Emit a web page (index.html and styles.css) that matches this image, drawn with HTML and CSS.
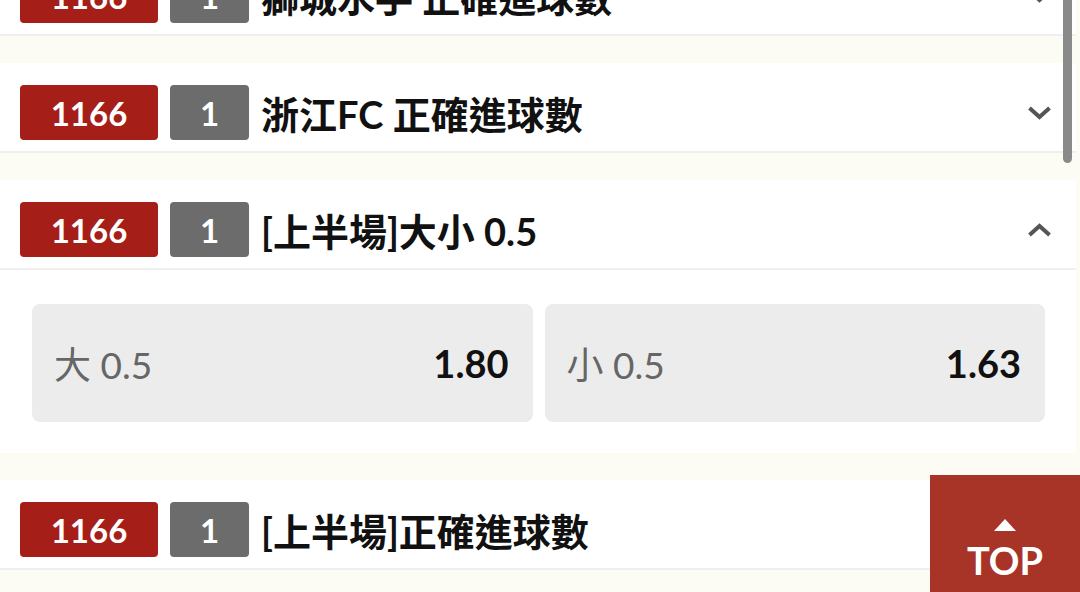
FILE: index.html
```html
<!DOCTYPE html>
<html lang="zh-Hant">
<head>
<meta charset="utf-8">
<link rel="stylesheet" href="styles.css">
</head>
<body>
<div class="list">
  <section class="card">
    <div class="head">
      <span class="badge red">1166</span>
      <span class="badge gray">1</span>
      <span class="title">獅城水手 正確進球數</span>
      <svg class="chev" viewBox="0 0 24 14"><path d="M2 2 L12 11 L22 2"/></svg>
    </div>
  </section>
  <section class="card">
    <div class="head">
      <span class="badge red">1166</span>
      <span class="badge gray">1</span>
      <span class="title">浙江FC 正確進球數</span>
      <svg class="chev" viewBox="0 0 24 14"><path d="M2 2 L12 11 L22 2"/></svg>
    </div>
  </section>
  <section class="card">
    <div class="head">
      <span class="badge red">1166</span>
      <span class="badge gray">1</span>
      <span class="title">[上半場]大小 0.5</span>
      <svg class="chev" viewBox="0 0 24 14"><path d="M2 12 L12 3 L22 12"/></svg>
    </div>
    <div class="body">
      <div class="odd"><span class="lbl">大 0.5</span><span class="val">1.80</span></div>
      <div class="odd"><span class="lbl">小 0.5</span><span class="val">1.63</span></div>
    </div>
  </section>
  <section class="card">
    <div class="head">
      <span class="badge red">1166</span>
      <span class="badge gray">1</span>
      <span class="title">[上半場]正確進球數</span>
      <svg class="chev" viewBox="0 0 24 14"><path d="M2 2 L12 11 L22 2"/></svg>
    </div>
  </section>
</div>
<div class="scrollbar"></div>
<div class="top-btn">
  <span class="tri"></span>
  <span class="top-txt">TOP</span>
</div>
</body>
</html>
```

FILE: styles.css
```css
html, body {
  margin: 0;
  padding: 0;
  background: #fdfcf4;
  overflow: hidden;
  font-family: Lato, "Noto Sans CJK TC", sans-serif;
}
.list {
  width: 1076px;
  margin-top: -54px;
  display: flex;
  flex-direction: column;
  gap: 27px;
}
.card {
  background: #ffffff;
}
.head {
  display: flex;
  align-items: center;
  height: 55px;
  padding: 22px 24px 11px 20px;
  border-bottom: 2px solid #efeff1;
}
.badge {
  height: 55px;
  display: flex;
  align-items: center;
  justify-content: center;
  border-radius: 4px;
  color: #fff;
  font-size: 33px;
  font-weight: 700;
}
.red {
  width: 138px;
  background: #a51f18;
}
.gray {
  width: 79px;
  margin-left: 12px;
  background: #6c6c6c;
}
.title {
  margin-left: 12px;
  font-size: 38px;
  font-weight: 700;
  color: #111;
  white-space: nowrap;
}
.chev {
  margin-left: auto;
  width: 25px;
  height: 14px;
}
.chev path {
  fill: none;
  stroke: #555;
  stroke-width: 4;
}
.body {
  display: flex;
  gap: 12px;
  padding: 34px 31px 31px 32px;
}
.odd {
  flex: 1;
  height: 118px;
  background: #ececec;
  border-radius: 8px;
  display: flex;
  align-items: center;
  justify-content: space-between;
  padding: 0 24px 0 22px;
}
.lbl {
  font-size: 37px;
  color: #666;
}
.val {
  font-size: 38px;
  font-weight: 700;
  color: #111;
}
.scrollbar {
  position: absolute;
  top: 0;
  left: 1063px;
  width: 9px;
  height: 163px;
  border-radius: 0 0 5px 5px;
  background: #8a8a8a;
}
.top-btn {
  position: fixed;
  left: 930px;
  top: 475px;
  width: 150px;
  height: 130px;
  background: #a83428;
  display: flex;
  flex-direction: column;
  align-items: center;
  padding-top: 44px;
  box-sizing: border-box;
}
.tri {
  width: 0;
  height: 0;
  border-left: 11px solid transparent;
  border-right: 11px solid transparent;
  border-bottom: 12px solid #fff;
}
.top-txt {
  color: #fff;
  font-size: 38px;
  font-weight: 700;
  margin-top: 7px;
  line-height: 44px;
}
```
